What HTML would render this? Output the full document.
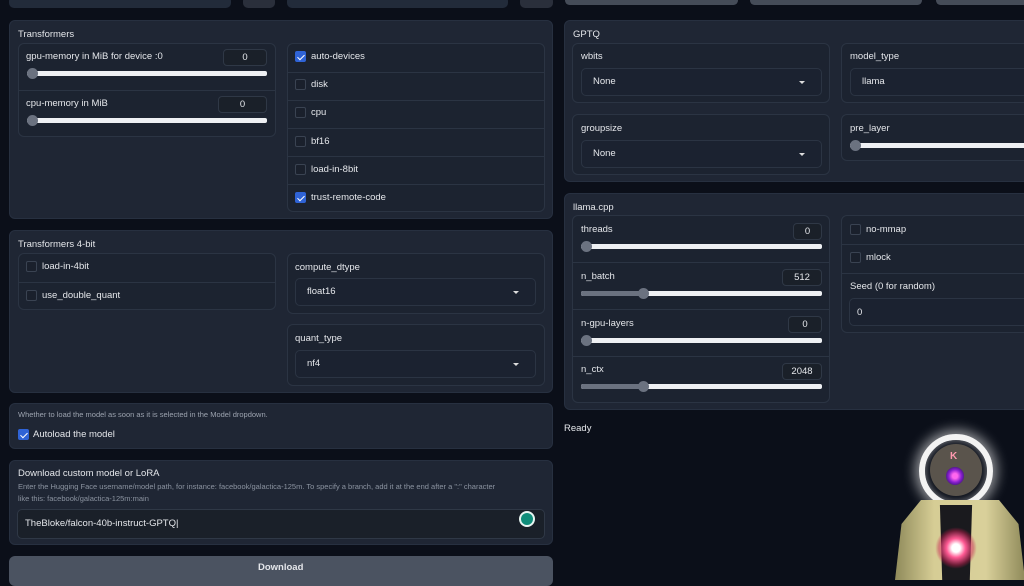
<!DOCTYPE html><html><head><meta charset="utf-8"><style>
*{box-sizing:border-box;margin:0;padding:0}
body{width:1024px;height:576px;overflow:hidden;background:#0b0f19;font-family:"Liberation Sans",sans-serif;color:#e5e7eb;position:relative}
.a{position:absolute}
.pan{position:absolute;background:#1f2634;border-radius:6px;border:1px solid #273040}
.grp{position:absolute;background:#1c2330;border:1px solid #2b3443;border-radius:6px}
.t{position:absolute;font-size:9.5px;color:#e5e7eb;white-space:nowrap}
.row{position:absolute;left:0;right:0;border-top:1px solid #2b3443}
.cb{position:absolute;width:11px;height:11px;border:1px solid #3a4352;border-radius:2px;background:#1a202c}
.cb.on{background:#2f63d6;border-color:#2f63d6}
.cb.on:after{content:"";position:absolute;left:3px;top:1px;width:3px;height:6px;border:solid #fff;border-width:0 1.5px 1.5px 0;transform:rotate(45deg)}
.num{position:absolute;height:17px;border:1px solid #2f3846;border-radius:4px;background:#1a2029;font-size:9.5px;text-align:center;line-height:15px;color:#e5e7eb}
.sl{position:absolute;height:5px;background:#eef0f3;border-radius:2px}
.sl i{position:absolute;top:-3px;width:11px;height:11px;border-radius:50%;background:#6b7280}
.sl b{position:absolute;left:0;top:0;height:5px;background:#6b7280;border-radius:2px}
.sel{position:absolute;height:28px;border:1px solid #2b3443;border-radius:5px;background:#1b2230;font-size:9.5px;line-height:26px;padding-left:11px;color:#e5e7eb}
.sel:after{content:"";position:absolute;right:16px;top:12px;border:3px solid transparent;border-top:3px solid #ddd}
</style></head><body>
<!-- top bars -->
<div class="a" style="left:9px;top:-4px;width:222px;height:12px;background:#222b3a;border-radius:5px"></div>
<div class="a" style="left:243px;top:-4px;width:32px;height:12px;background:#2a2f3b;border-radius:5px"></div>
<div class="a" style="left:287px;top:-4px;width:221px;height:12px;background:#222b3a;border-radius:5px"></div>
<div class="a" style="left:520px;top:-4px;width:33px;height:12px;background:#2a2f3b;border-radius:5px"></div>
<div class="a" style="left:565px;top:-4px;width:173px;height:9px;background:#454c58;border-radius:5px"></div>
<div class="a" style="left:750px;top:-4px;width:172px;height:9px;background:#454c58;border-radius:5px"></div>
<div class="a" style="left:936px;top:-4px;width:100px;height:9px;background:#454c58;border-radius:5px"></div>

<!-- Transformers -->
<div class="pan" style="left:9px;top:20px;width:544px;height:199px"></div>
<div class="t" style="left:18px;top:29px">Transformers</div>
<div class="grp" style="left:18px;top:43px;width:258px;height:94px"><div class="row" style="top:46px"></div></div>
<div class="t" style="left:26px;top:51px">gpu-memory in MiB for device :0</div>
<div class="num" style="left:223px;top:49px;width:44px">0</div>
<div class="sl" style="left:27px;top:71px;width:240px"><i style="left:0"></i></div>
<div class="t" style="left:26px;top:98px">cpu-memory in MiB</div>
<div class="num" style="left:218px;top:96px;width:49px">0</div>
<div class="sl" style="left:27px;top:118px;width:240px"><i style="left:0"></i></div>
<div class="grp" style="left:287px;top:43px;width:258px;height:169px">
<div class="row" style="top:28px"></div><div class="row" style="top:56px"></div><div class="row" style="top:84px"></div><div class="row" style="top:112px"></div><div class="row" style="top:140px"></div></div>
<div class="cb on" style="left:295px;top:51px"></div><div class="t" style="left:311px;top:51px">auto-devices</div>
<div class="cb" style="left:295px;top:79px"></div><div class="t" style="left:311px;top:79px">disk</div>
<div class="cb" style="left:295px;top:107px"></div><div class="t" style="left:311px;top:107px">cpu</div>
<div class="cb" style="left:295px;top:136px"></div><div class="t" style="left:311px;top:136px">bf16</div>
<div class="cb" style="left:295px;top:164px"></div><div class="t" style="left:311px;top:164px">load-in-8bit</div>
<div class="cb on" style="left:295px;top:192px"></div><div class="t" style="left:311px;top:192px">trust-remote-code</div>

<!-- Transformers 4-bit -->
<div class="pan" style="left:9px;top:230px;width:544px;height:163px"></div>
<div class="t" style="left:18px;top:239px">Transformers 4-bit</div>
<div class="grp" style="left:18px;top:253px;width:258px;height:57px"><div class="row" style="top:28px"></div></div>
<div class="cb" style="left:26px;top:261px"></div><div class="t" style="left:42px;top:261px">load-in-4bit</div>
<div class="cb" style="left:26px;top:290px"></div><div class="t" style="left:42px;top:290px">use_double_quant</div>
<div class="grp" style="left:287px;top:253px;width:258px;height:61px"></div>
<div class="t" style="left:295px;top:262px">compute_dtype</div>
<div class="sel" style="left:295px;top:278px;width:241px">float16</div>
<div class="grp" style="left:287px;top:324px;width:258px;height:62px"></div>
<div class="t" style="left:295px;top:333px">quant_type</div>
<div class="sel" style="left:295px;top:350px;width:241px">nf4</div>

<!-- autoload -->
<div class="pan" style="left:9px;top:403px;width:544px;height:46px"></div>
<div class="t" style="left:18px;top:410px;font-size:7.5px;color:#9ca3af">Whether to load the model as soon as it is selected in the Model dropdown.</div>
<div class="cb on" style="left:18px;top:429px"></div><div class="t" style="left:33px;top:429px">Autoload the model</div>

<!-- download -->
<div class="pan" style="left:9px;top:460px;width:544px;height:85px"></div>
<div class="t" style="left:18px;top:468px">Download custom model or LoRA</div>
<div class="t" style="left:18px;top:482px;font-size:7.5px;color:#8b93a0">Enter the Hugging Face username/model path, for instance: facebook/galactica-125m. To specify a branch, add it at the end after a ":" character</div>
<div class="t" style="left:18px;top:494px;font-size:7.5px;color:#8b93a0">like this: facebook/galactica-125m:main</div>
<div class="a" style="left:17px;top:509px;width:528px;height:30px;border:1px solid #2f3846;border-radius:5px;background:#1a2029"></div>
<div class="t" style="left:25px;top:518px">TheBloke/falcon-40b-instruct-GPTQ|</div>
<div class="a" style="left:519px;top:511px;width:16px;height:16px;border-radius:50%;background:#e8f5f2"><div class="a" style="left:2px;top:2px;width:12px;height:12px;border-radius:50%;background:#0f8d7a"></div></div>
<div class="a" style="left:9px;top:556px;width:544px;height:30px;background:#4b5361;border-radius:6px"></div>
<div class="t" style="left:258px;top:562px;font-weight:bold;font-size:9.5px">Download</div>

<!-- GPTQ -->
<div class="pan" style="left:564px;top:20px;width:470px;height:162px"></div>
<div class="t" style="left:573px;top:29px">GPTQ</div>
<div class="grp" style="left:572px;top:43px;width:258px;height:60px"></div>
<div class="t" style="left:581px;top:51px">wbits</div>
<div class="sel" style="left:581px;top:68px;width:241px">None</div>
<div class="grp" style="left:841px;top:43px;width:200px;height:60px"></div>
<div class="t" style="left:850px;top:51px">model_type</div>
<div class="sel" style="left:850px;top:68px;width:240px">llama</div>
<div class="grp" style="left:572px;top:114px;width:258px;height:61px"></div>
<div class="t" style="left:581px;top:123px">groupsize</div>
<div class="sel" style="left:581px;top:140px;width:241px">None</div>
<div class="grp" style="left:841px;top:114px;width:200px;height:47px"></div>
<div class="t" style="left:850px;top:123px">pre_layer</div>
<div class="sl" style="left:850px;top:143px;width:180px"><i style="left:0"></i></div>

<!-- llama.cpp -->
<div class="pan" style="left:564px;top:193px;width:470px;height:217px"></div>
<div class="t" style="left:573px;top:202px">llama.cpp</div>
<div class="grp" style="left:572px;top:215px;width:258px;height:188px">
<div class="row" style="top:46px"></div><div class="row" style="top:93px"></div><div class="row" style="top:140px"></div></div>
<div class="t" style="left:581px;top:224px">threads</div>
<div class="num" style="left:793px;top:223px;width:29px">0</div>
<div class="sl" style="left:581px;top:244px;width:241px"><i style="left:0"></i></div>
<div class="t" style="left:581px;top:271px">n_batch</div>
<div class="num" style="left:782px;top:269px;width:40px">512</div>
<div class="sl" style="left:581px;top:291px;width:241px"><b style="width:62px"></b><i style="left:57px"></i></div>
<div class="t" style="left:581px;top:318px">n-gpu-layers</div>
<div class="num" style="left:788px;top:316px;width:34px">0</div>
<div class="sl" style="left:581px;top:338px;width:241px"><i style="left:0"></i></div>
<div class="t" style="left:581px;top:364px">n_ctx</div>
<div class="num" style="left:782px;top:363px;width:40px">2048</div>
<div class="sl" style="left:581px;top:384px;width:241px"><b style="width:62px"></b><i style="left:57px"></i></div>
<div class="grp" style="left:841px;top:215px;width:200px;height:118px">
<div class="row" style="top:28px"></div><div class="row" style="top:57px"></div></div>
<div class="cb" style="left:850px;top:224px"></div><div class="t" style="left:866px;top:224px">no-mmap</div>
<div class="cb" style="left:850px;top:252px"></div><div class="t" style="left:866px;top:252px">mlock</div>
<div class="t" style="left:850px;top:281px">Seed (0 for random)</div>
<div class="a" style="left:849px;top:298px;width:190px;height:28px;border:1px solid #2b3443;border-radius:5px;background:#1b2230"></div>
<div class="t" style="left:857px;top:307px">0</div>
<div class="t" style="left:564px;top:423px">Ready</div>

<!-- avatar -->
<div class="a" style="left:919px;top:434px;width:74px;height:74px;border-radius:50%;border:6px solid #f3f3f3;box-shadow:0 0 12px 4px rgba(255,255,255,.55),inset 0 0 8px rgba(255,255,255,.5)"></div>
<div class="a" style="left:895px;top:500px;width:130px;height:80px;background:linear-gradient(90deg,#8f8a5a,#d6cd95 30%,#d9d09a 70%,#8f8a5a);clip-path:polygon(20% 0,80% 0,95% 30%,100% 100%,0 100%,5% 30%)"></div>
<div class="a" style="left:933px;top:505px;width:46px;height:75px;background:#1a1a1e;clip-path:polygon(15% 0,85% 0,80% 100%,20% 100%)"></div>
<div class="a" style="left:935px;top:527px;width:42px;height:42px;border-radius:50%;background:radial-gradient(#fff 0 14%,#ff5a94 32%,rgba(200,30,80,.45) 58%,transparent 70%)"></div>
<div class="a" style="left:930px;top:444px;width:52px;height:52px;border-radius:50%;background:#5a544c"></div>
<div class="t" style="left:950px;top:451px;color:#ff9ab0;font-weight:bold;font-size:10px">K</div>
<div class="a" style="left:946px;top:467px;width:18px;height:18px;border-radius:50%;background:radial-gradient(#f6e 0 20%,#8a1fd0 50%,#3a1670 80%)"></div>
</body></html>
